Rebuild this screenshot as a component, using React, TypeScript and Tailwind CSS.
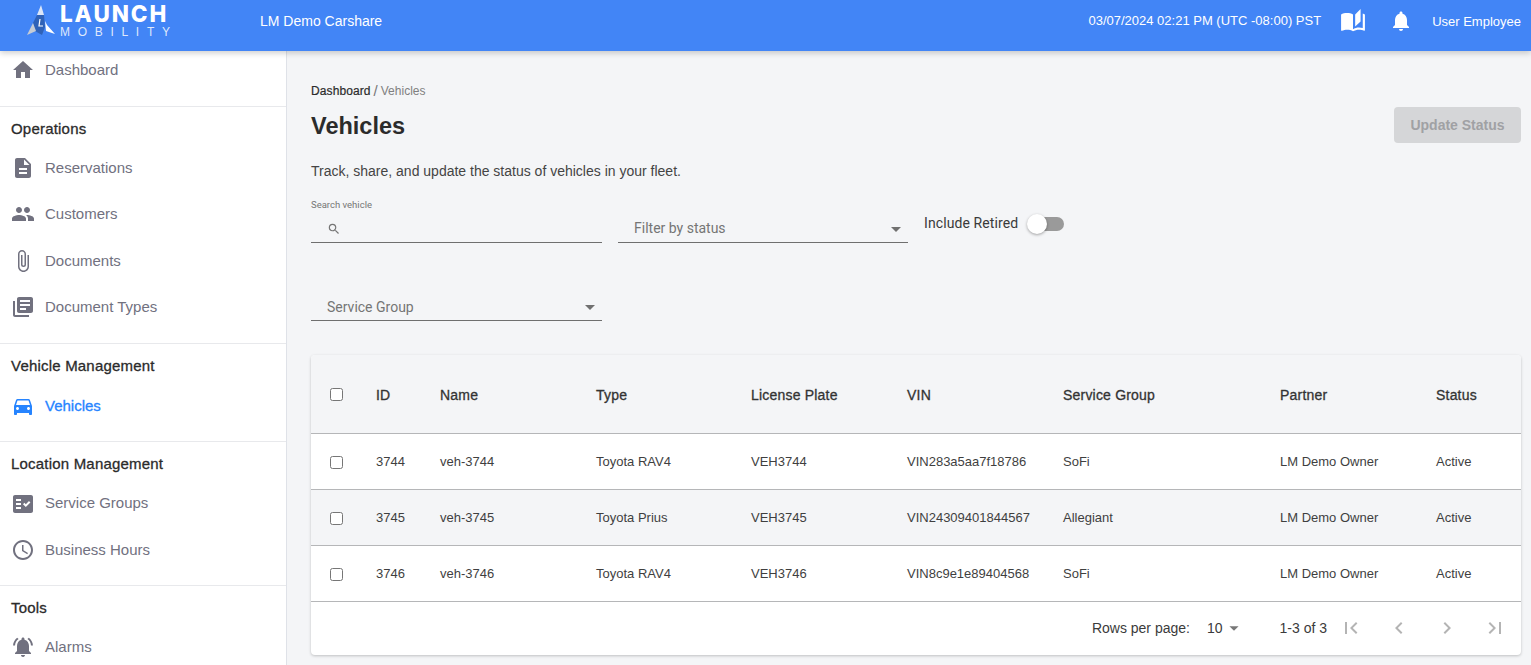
import React from "react";
import {
  MdHome, MdDescription, MdPeople, MdAttachFile, MdLibraryBooks, MdDirectionsCar, MdFactCheck,
  MdAccessTime, MdNotificationsActive, MdAutoStories, MdNotifications, MdSearch, MdArrowDropDown,
  MdFirstPage, MdChevronLeft, MdChevronRight, MdLastPage,
} from "react-icons/md";

const base = "font-['Liberation_Sans',Arial,sans-serif]";
const roboto = "font-['Roboto','Liberation_Sans',sans-serif]";
const medium = "tracking-[0.2px] [-webkit-text-stroke:0.3px_currentColor]";

function NavItem({ icon: Icon, label, active = false, cls = "h-[46px]" }: { icon: any; label: string; active?: boolean; cls?: string }) {
  return (
    <div className={`flex items-center ${cls} ${active ? "text-[#2684ff]" : "text-[#71717f]"}`}>
      <div className="flex w-[46px] justify-center">
        <Icon size={24} />
      </div>
      <span className={`ml-[-1px] text-[15px] ${active ? "[-webkit-text-stroke:0.3px_currentColor]" : ""}`}>{label}</span>
    </div>
  );
}

function Section({ title, children }: { title: string; children: React.ReactNode }) {
  return (
    <div className="border-t border-[#e8e9ec] pb-3">
      <div className={`px-[11px] pt-[14px] pb-2 text-[15px] leading-4 text-[#2b2b2b] ${medium}`}>{title}</div>
      {children}
    </div>
  );
}

function Sidebar() {
  return (
    <aside className="h-full w-[287px] shrink-0 overflow-hidden border-r border-[#dfe2e8] bg-white">
      <div className="h-[55px]">
        <NavItem icon={MdHome} label="Dashboard" cls="h-[38px]" />
      </div>
      <Section title="Operations">
        <NavItem icon={MdDescription} label="Reservations" />
        <NavItem icon={MdPeople} label="Customers" />
        <NavItem icon={MdAttachFile} label="Documents" cls="h-[47px] pt-[1px]" />
        <NavItem icon={MdLibraryBooks} label="Document Types" cls="h-[47px] pb-[1px]" />
      </Section>
      <Section title="Vehicle Management">
        <NavItem icon={MdDirectionsCar} label="Vehicles" active cls="h-[47px] pt-[1px]" />
      </Section>
      <Section title="Location Management">
        <NavItem icon={MdFactCheck} label="Service Groups" cls="h-[47px]" />
        <NavItem icon={MdAccessTime} label="Business Hours" />
      </Section>
      <Section title="Tools">
        <NavItem icon={MdNotificationsActive} label="Alarms" />
      </Section>
    </aside>
  );
}

function Logo() {
  return (
    <div className="ml-[27px] flex w-[200px] items-start self-start">
      <svg width="28" height="31" viewBox="0 0 28 31" className="mt-[5px] shrink-0">
        <polygon points="14,0 10,10 17,10" fill="#dbe6f8" />
        <polygon points="10,10 6,18 8,26 15,30 18,22 17,10" fill="#2f62b8" />
        <polygon points="6,18 0,30 9,26" fill="#c6ccd5" />
        <polygon points="18,16 20,20 28,29 19,26" fill="#ffffff" />
        <path d="M13 14 L12 21 L16 21" stroke="#ffffff" strokeWidth="1.2" fill="none" />
      </svg>
      <div className="ml-[5px] flex flex-col">
        <span className="font-['Inter','Liberation_Sans',sans-serif] text-[22.5px] leading-[28px] font-extrabold tracking-[1.9px] text-white">LAUNCH</span>
        <span className="mt-[-3px] text-[12px] leading-[14px] tracking-[7.7px] text-[#dfe8fb]">MOBILITY</span>
      </div>
    </div>
  );
}

function Header() {
  return (
    <header className="relative z-10 flex h-[51px] shrink-0 items-center bg-[#4285f6] pb-[9px] text-white shadow-[0_2px_6px_rgba(0,0,0,0.2)]">
      <Logo />
      <span className="ml-[33px] text-[14px]">LM Demo Carshare</span>
      <div className="ml-auto flex items-center">
        <span className="mt-[-1px] mr-[-1px] text-[13px]">03/07/2024 02:21 PM (UTC -08:00) PST</span>
        <MdAutoStories size={26} className="ml-[20px]" />
        <MdNotifications size={24} className="ml-[23px]" />
        <span className="mt-[2px] mr-[10px] ml-[19px] text-[13px]">User Employee</span>
      </div>
    </header>
  );
}

function Box() {
  return <span className="block h-[13px] w-[13px] rounded-[2.5px] border border-[#767676] bg-white" />;
}

const rows = [
  ["3744", "veh-3744", "Toyota RAV4", "VEH3744", "VIN283a5aa7f18786", "SoFi", "LM Demo Owner", "Active"],
  ["3745", "veh-3745", "Toyota Prius", "VEH3745", "VIN24309401844567", "Allegiant", "LM Demo Owner", "Active"],
  ["3746", "veh-3746", "Toyota RAV4", "VEH3746", "VIN8c9e1e89404568", "SoFi", "LM Demo Owner", "Active"],
];
const heads = ["ID", "Name", "Type", "License Plate", "VIN", "Service Group", "Partner", "Status"];

function VehicleTable() {
  return (
    <div className="mt-[34px] overflow-hidden rounded-[4px] bg-white shadow-[0_1px_3px_rgba(0,0,0,0.22)]">
      <table className="w-full table-fixed border-collapse">
        <colgroup>
          <col className="w-[65px]" />
          <col className="w-[64px]" />
          <col className="w-[156px]" />
          <col className="w-[155px]" />
          <col className="w-[156px]" />
          <col className="w-[156px]" />
          <col className="w-[217px]" />
          <col className="w-[156px]" />
          <col />
        </colgroup>
        <thead>
          <tr className="h-[78px] border-b border-[#b5b6b8] bg-[#f4f5f7]">
            <th className="pt-[2px] pl-[19px] text-left"><Box /></th>
            {heads.map((h) => (
              <th key={h} className={`pt-[4px] text-left text-[14px] font-normal text-[#333] ${medium}`}>{h}</th>
            ))}
          </tr>
        </thead>
        <tbody>
          {rows.map((r, i) => (
            <tr key={r[0]} className={`h-[56px] border-b border-[#b5b6b8] ${i === 1 ? "bg-[#f4f5f7]" : "bg-white"}`}>
              <td className="pt-[2px] pl-[19px]"><Box /></td>
              {r.map((c, j) => (
                <td key={j} className="pt-[2px] text-[13px] text-[#3f3f3f]">{c}</td>
              ))}
            </tr>
          ))}
        </tbody>
      </table>
      <div className="flex h-[53px] items-center justify-end pr-[14px] text-[#3b3b3b]">
        <span className="text-[14px]">Rows per page:</span>
        <span className="ml-[17px] text-[14px]">10</span>
        <MdArrowDropDown size={22} className="text-[#777]" />
        <span className="ml-[35px] text-[14px]">1-3 of 3</span>
        <div className="ml-[12px] flex items-center gap-[24px] text-[#b4b4b4]">
          <MdFirstPage size={24} />
          <MdChevronLeft size={24} />
          <MdChevronRight size={24} />
          <MdLastPage size={24} />
        </div>
      </div>
    </div>
  );
}

function SelectField({ label, className = "", labelCls = "" }: { label: string; className?: string; labelCls?: string }) {
  return (
    <div className={`flex h-[27px] items-center justify-between border-b border-[#6f6f6f] pl-4 pr-[6px] ${className}`}>
      <span className={`${roboto} text-[14px] text-[#757575] ${labelCls}`}>{label}</span>
      <MdArrowDropDown size={24} className="mr-[-6px] text-[#707070]" />
    </div>
  );
}

function Main() {
  return (
    <main className="min-w-0 flex-1 overflow-hidden bg-[#f4f5f7] pt-[32px] pr-[10px] pl-[24px]">
      <div className="flex items-center text-[12px] leading-4">
        <span className="tracking-[0.1px] text-[#2b2b2b] [-webkit-text-stroke:0.2px_currentColor]">Dashboard</span>
        <span className="mx-[3px] text-[15px] leading-4 font-light text-[#777]">/</span>
        <span className="text-[#808080]">Vehicles</span>
      </div>
      <div className="mt-[8px] flex items-start justify-between">
        <h1 className="mt-[3px] text-[23.5px] leading-8 font-bold text-[#2b2b2b]">Vehicles</h1>
        <button className="h-[36px] w-[127px] rounded-[4px] bg-[#d5d6d8] text-[14px] font-bold text-[#a0a1a4]">Update Status</button>
      </div>
      <p className="mt-[18px] text-[14px] leading-5 text-[#444]">Track, share, and update the status of vehicles in your fleet.</p>

      <div className={`${roboto} mt-[18px] flex items-start`}>
        <div className="w-[291px]">
          <div className="text-[9.5px] leading-[12px] text-[#757575]">Search vehicle</div>
          <div className="mt-[5px] flex h-[27px] items-center border-b border-[#6f6f6f] pl-[16px]">
            <MdSearch size={14} className="text-[#757575]" />
          </div>
        </div>
        <SelectField label="Filter by status" labelCls="mt-[-2px]" className="mt-[17px] ml-[16px] w-[290px]" />
        <div className="mt-[14px] ml-[16px] flex items-center">
          <span className="text-[14px] tracking-[0.1px] text-[#3a3a3a]">Include Retired</span>
          <div className="relative ml-[9px] h-[14px] w-[37px]">
            <div className="absolute top-0 right-0 h-[14px] w-[34px] rounded-full bg-[#9a9a9a]" />
            <div className="absolute top-[-3px] left-0 h-[20px] w-[20px] rounded-full bg-white shadow-[0_1px_3px_rgba(0,0,0,0.35)]" />
          </div>
        </div>
      </div>

      <SelectField label="Service Group" className="mt-[51px] w-[291px]" />
      <VehicleTable />
    </main>
  );
}

export default function App() {
  return (
    <div className={`${base} flex h-[665px] w-[1531px] flex-col overflow-hidden`}>
      <Header />
      <div className="flex min-h-0 flex-1">
        <Sidebar />
        <Main />
      </div>
    </div>
  );
}
